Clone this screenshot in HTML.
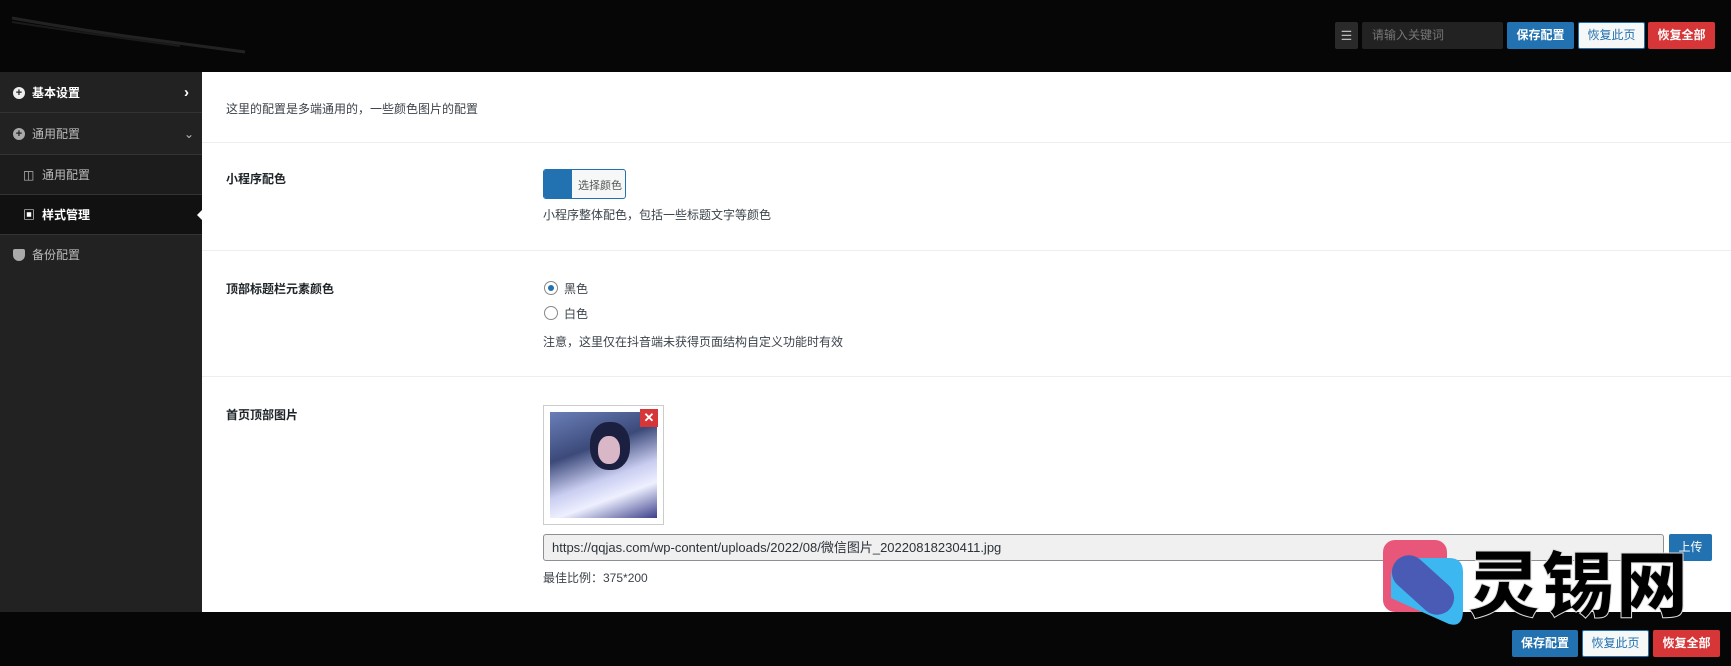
<!DOCTYPE html>
<html><head><meta charset="utf-8"><style>
*{margin:0;padding:0;box-sizing:border-box}
body{width:1731px;height:666px;overflow:hidden;background:#fff;font-family:"Liberation Sans","Noto Sans CJK SC",sans-serif;font-size:12px;color:#333;position:relative}
.a{position:absolute}
.top{left:0;top:0;width:1731px;height:72px;background:#060606}
.bot{left:0;top:612px;width:1731px;height:54px;background:#060606}
.side{left:0;top:72px;width:202px;height:540px;background:#222}
.item{position:absolute;left:0;width:202px;color:#ddd;font-size:12px;border-bottom:1px solid #333}
.btn{position:absolute;height:27px;line-height:27px;text-align:center;font-size:12px;border-radius:2px;font-weight:bold}
.blue{background:#2271b1;color:#fff}
.white{background:#f6f7f7;color:#2271b1;border:1px solid #2271b1;font-weight:normal;line-height:25px}
.red{background:#d63638;color:#fff}
.hr{position:absolute;left:202px;width:1529px;height:1px;background:#eee}
.lbl{position:absolute;left:226px;font-weight:bold;color:#1d2327;font-size:12px}
.t{position:absolute;font-size:12px;color:#3c434a}
.ic{position:absolute;width:12px;height:12px;border-radius:50%;background:#eee;top:14px;left:13px;color:#222;font-size:11px;line-height:12px;text-align:center;font-weight:bold}
</style></head><body>
<div class="a top"></div>
<svg class="a" style="left:0;top:0" width="260" height="60"><path d="M12 18 Q80 30 140 38 T245 52" stroke="#222" stroke-width="3" fill="none"/><path d="M12 22 Q90 34 180 46" stroke="#1a1a1a" stroke-width="2" fill="none"/></svg>
<div class="a" style="left:1335px;top:22px;width:23px;height:27px;background:#2a2a2a;border-radius:2px;color:#bbb;text-align:center;line-height:27px;font-size:13px">☰</div>
<div class="a" style="left:1362px;top:22px;width:141px;height:27px;background:#222;border-radius:2px;color:#777;padding-left:10px;line-height:27px;font-size:12px">请输入关键词</div>
<div class="btn blue" style="left:1507px;top:22px;width:67px">保存配置</div>
<div class="btn white" style="left:1578px;top:22px;width:67px">恢复此页</div>
<div class="btn red" style="left:1648px;top:22px;width:67px">恢复全部</div>

<div class="a side"></div>
<div class="item" style="top:73px;height:40px;line-height:40px;font-weight:bold;color:#fff"><span class="ic">+</span><span style="position:absolute;left:32px">基本设置</span><span style="position:absolute;left:184px;font-size:15px">›</span></div>
<div class="item" style="top:113px;height:42px;line-height:42px;color:#bbb"><span class="ic" style="background:#aaa;top:15px">+</span><span style="position:absolute;left:32px">通用配置</span><span style="position:absolute;left:184px">⌄</span></div>
<div class="item" style="top:155px;height:40px;line-height:40px;background:#1c1c1c;color:#bbb"><span style="position:absolute;left:23px">◫</span><span style="position:absolute;left:42px">通用配置</span></div>
<div class="item" style="top:195px;height:40px;line-height:40px;background:#111;color:#fff;font-weight:bold"><span style="position:absolute;left:23px">▣</span><span style="position:absolute;left:42px">样式管理</span></div>
<div class="a" style="left:197px;top:210px;width:0;height:0;border-top:5px solid transparent;border-bottom:5px solid transparent;border-right:5px solid #fff"></div>
<div class="item" style="top:235px;height:40px;line-height:40px;color:#bbb;border:none"><span class="ic" style="background:#aaa;border-radius:2px 2px 6px 6px"></span><span style="position:absolute;left:32px">备份配置</span></div>

<div class="t" style="left:226px;top:100px">这里的配置是多端通用的，一些颜色图片的配置</div>
<div class="hr" style="top:142px"></div>
<div class="lbl" style="top:170px">小程序配色</div>
<div class="a" style="left:543px;top:169px;width:83px;height:30px;border:1px solid #2271b1;border-radius:3px;background:#f6f7f7;overflow:hidden"><div style="position:absolute;left:0;top:0;width:28px;height:30px;background:#2271b1"></div><span style="position:absolute;left:34px;top:7px;font-size:11px;color:#555">选择颜色</span></div>
<div class="t" style="left:543px;top:206px">小程序整体配色，包括一些标题文字等颜色</div>
<div class="hr" style="top:250px"></div>
<div class="lbl" style="top:280px">顶部标题栏元素颜色</div>
<div class="a" style="left:544px;top:281px;width:14px;height:14px;border:1px solid #888;border-radius:50%"><div style="margin:3px;width:6px;height:6px;border-radius:50%;background:#2271b1"></div></div>
<div class="t" style="left:564px;top:280px">黑色</div>
<div class="a" style="left:544px;top:306px;width:14px;height:14px;border:1px solid #888;border-radius:50%"></div>
<div class="t" style="left:564px;top:305px">白色</div>
<div class="t" style="left:543px;top:333px">注意，这里仅在抖音端未获得页面结构自定义功能时有效</div>
<div class="hr" style="top:376px"></div>
<div class="lbl" style="top:406px">首页顶部图片</div>
<div class="a" style="left:543px;top:405px;width:121px;height:120px;border:1px solid #ccc;padding:6px">
<div style="width:107px;height:106px;background:linear-gradient(160deg,#6a7fb8 0%,#3c4a7a 35%,#c9cdf0 60%,#eef0ff 75%,#3b3f8a 100%);position:relative"><div style="position:absolute;left:40px;top:10px;width:40px;height:48px;border-radius:45%;background:#1c2040"></div><div style="position:absolute;left:48px;top:24px;width:22px;height:28px;border-radius:45%;background:#d9b7c7"></div></div>
<div style="position:absolute;right:5px;top:3px;width:18px;height:18px;background:#d63638;color:#fff;font-weight:bold;text-align:center;line-height:18px;font-size:13px">✕</div></div>
<div class="a" style="left:543px;top:534px;width:1121px;height:27px;border:1px solid #8c8f94;border-radius:3px;background:#f0f0f1;padding-left:8px;line-height:25px;font-size:13px;color:#2c3338">https://qqjas.com/wp-content/uploads/2022/08/微信图片_20220818230411.jpg</div>
<div class="btn blue" style="left:1669px;top:534px;width:43px;font-weight:normal">上传</div>
<div class="t" style="left:543px;top:569px">最佳比例：375*200</div>

<div class="a bot"></div>
<div class="btn blue" style="left:1512px;top:630px;width:66px">保存配置</div>
<div class="btn white" style="left:1582px;top:630px;width:67px">恢复此页</div>
<div class="btn red" style="left:1653px;top:630px;width:67px">恢复全部</div>

<svg class="a" style="left:1383px;top:538px" width="90" height="95">
<rect x="0" y="2" width="64" height="72" rx="12" fill="#e8577a"/>
<path d="M8 60 L8 40 Q8 20 28 20 L66 20 Q80 20 80 34 L80 72 Q80 90 66 86 Z" fill="#3db7f0"/>
<rect x="4" y="30" width="72" height="34" rx="17" fill="#4a5bb6" transform="rotate(42 40 47)"/>
</svg>
<div class="a" style="left:1468px;top:538px;font-size:72px;font-weight:900;color:#000;line-height:84px;letter-spacing:2px;-webkit-text-stroke:1px #ddd;font-family:'Noto Sans CJK SC',sans-serif">灵锡网</div>
</body></html>
